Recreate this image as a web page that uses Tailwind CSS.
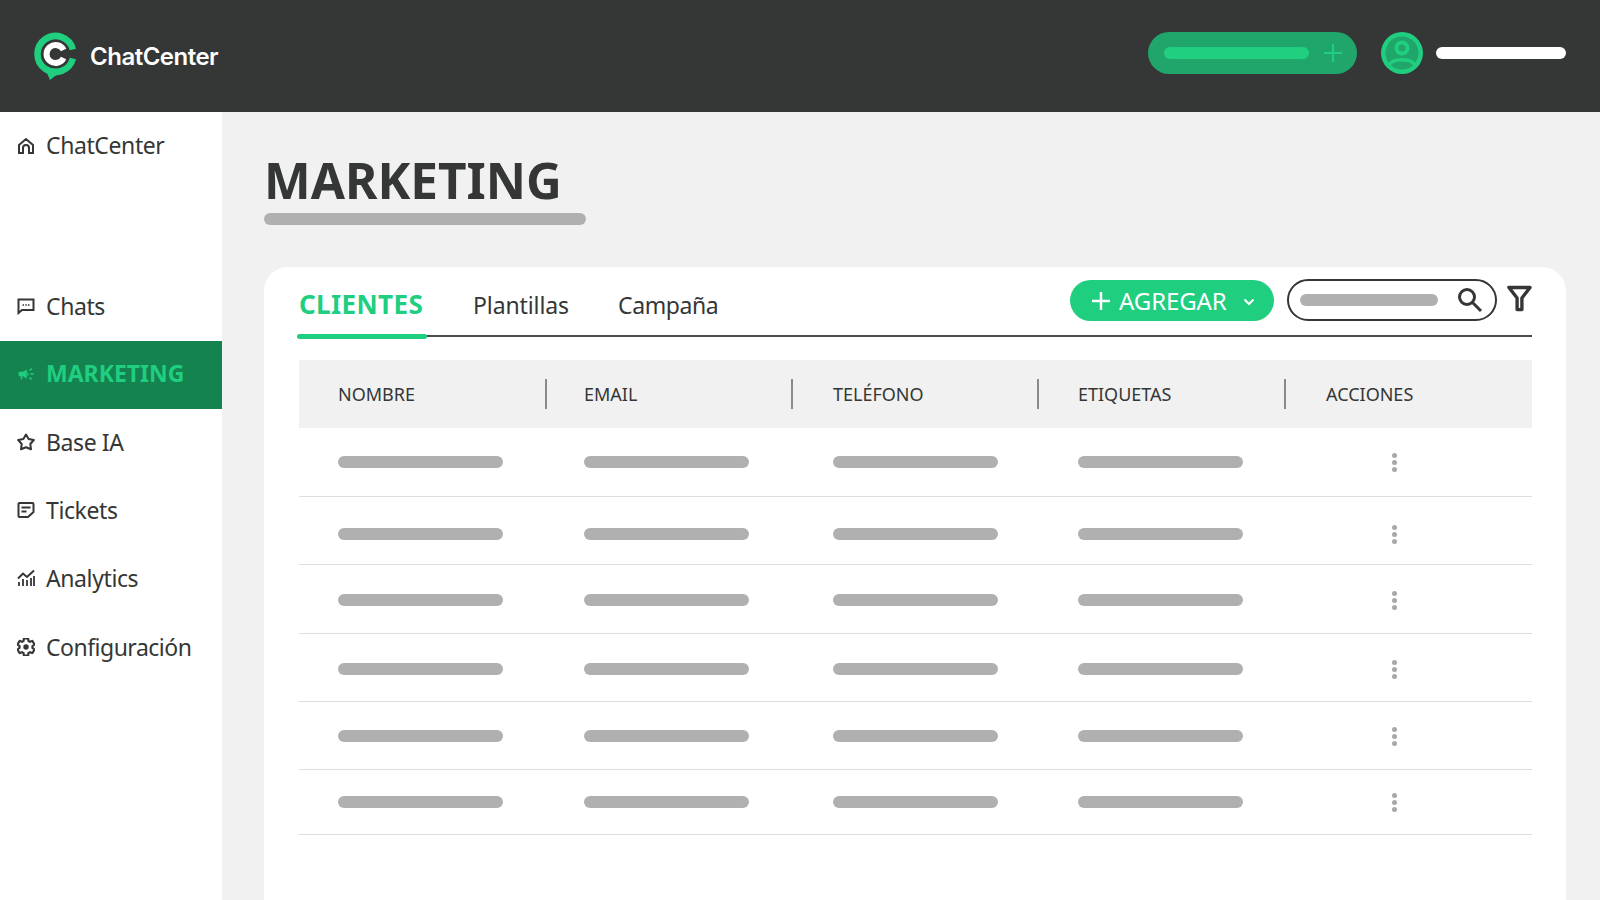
<!DOCTYPE html>
<html lang="es">
<head>
    <meta charset="UTF-8">
    <meta name="viewport" content="width=device-width, initial-scale=1.0">
    <title>ChatCenter - Marketing</title>
    <script src="https://cdn.jsdelivr.net/npm/@tailwindcss/browser@4"></script>
</head>
<body class="h-screen overflow-hidden flex flex-col bg-[#f1f1f1] text-[#343736] font-['Noto_Sans',sans-serif]">

<!-- Header -->
<header class="h-[112px] shrink-0 bg-[#343736] flex items-center pl-[33px] pr-[34px]">
    <svg class="w-[44px] h-[50px] mt-[2px]" viewBox="0 0 44 50" fill="none">
        <path d="M39.900 17.500A18 18 0 1 0 39.900 26.500" stroke="#20ce7f" stroke-width="6.500"/>
        <path d="M12 36L17 48L31 37Z" fill="#20ce7f"/>
        <path d="M30.600 18A9 9 0 1 0 30.600 26" stroke="#fff" stroke-width="6"/>
    </svg>
    <span class="ml-[13px] mt-[2px] text-[24px] font-semibold text-white font-['Inter',sans-serif] tracking-[-0.5px]">ChatCenter</span>
    <div class="ml-auto flex items-center pb-[6px]">
        <div class="w-[209px] h-[42px] rounded-full bg-[#20a56a] flex items-center pl-[16px]">
            <div class="w-[145px] h-[12px] rounded-full bg-[#20d080]"></div>
            <svg class="w-[20px] h-[20px] ml-[14px]" viewBox="0 0 20 20" fill="none" stroke="#20ce7f" stroke-width="2"><path d="M10 1v18M1 10h18"/></svg>
        </div>
        <svg class="w-[42px] h-[42px] ml-[24px]" viewBox="0 0 42 42">
            <circle cx="21" cy="21" r="21" fill="#20ce7f"/>
            <circle cx="21" cy="21" r="16.500" fill="#20a56a"/>
            <circle cx="21" cy="16" r="7.500" fill="#20ce7f"/>
            <circle cx="21" cy="16" r="3.500" fill="#20a56a"/>
            <path d="M8 33C12 26 30 26 34 33" fill="none" stroke="#20ce7f" stroke-width="3.500"/>
        </svg>
        <div class="ml-[13px] w-[130px] h-[12px] rounded-full bg-white"></div>
    </div>
</header>

<div class="flex flex-1 min-h-0">
    <!-- Sidebar -->
    <aside class="w-[222px] shrink-0 bg-white text-[23px] tracking-[-0.4px]">
        <a class="h-[67px] flex items-center pl-[17px] gap-[11px]">
            <svg class="w-[18px] h-[18px]" viewBox="0 0 18 18" fill="none" stroke="#343736" stroke-width="2"><path d="M2 8L9 2l7 6v8h-4v-5a3 3 0 0 0-6 0v5H2z"/></svg>
            <span>ChatCenter</span>
        </a>
        <a class="h-[68px] pb-[2px] mt-[94px] flex items-center pl-[17px] gap-[11px]">
            <svg class="w-[18px] h-[18px]" viewBox="0 0 18 18" fill="none" stroke="#343736" stroke-width="2"><path d="M1.500 2.500h15v10.500H5l-3.500 3z"/><path d="M5.500 8h1.500M8.300 8h1.500M11 8h1.500" stroke-width="1.500"/></svg>
            <span>Chats</span>
        </a>
        <a class="h-[68px] pb-[3px] flex items-center pl-[17px] gap-[11px] bg-[#14834f] text-[#20ce7f] font-bold tracking-normal">
            <svg class="w-[18px] h-[18px]" viewBox="0 0 24 24" fill="#20ce7f"><path d="M18 11v2h4v-2h-4zm-2 6.610c.96.71 2.210 1.650 3.200 2.390.4-.53.8-1.070 1.200-1.600-.99-.74-2.240-1.680-3.200-2.400-.4.54-.8 1.080-1.200 1.610zM20.400 5.600c-.4-.53-.8-1.070-1.200-1.600-.99.74-2.240 1.680-3.200 2.400.4.53.8 1.070 1.200 1.600.96-.72 2.210-1.650 3.200-2.400zM4 9c-1.100 0-2 .9-2 2v2c0 1.100.9 2 2 2h1v4h2v-4h1l5 3V6L8 9H4zm11.500 3c0-1.330-.58-2.530-1.500-3.350v6.690c.92-.81 1.500-2.010 1.500-3.340z"/></svg>
            <span>MARKETING</span>
        </a>
        <a class="h-[68px] pb-[2px] flex items-center pl-[17px] gap-[11px]">
            <svg class="w-[18px] h-[18px]" viewBox="0 0 18 18" fill="none" stroke="#343736" stroke-width="2" stroke-linejoin="round"><path d="M9 1.500L11.600 6L16.800 7L13.300 11L14 16.300L9 14.300L4 16.300L4.700 11L1.200 7L6.400 6Z"/></svg>
            <span>Base IA</span>
        </a>
        <a class="h-[68px] pb-[2px] flex items-center pl-[17px] gap-[11px]">
            <svg class="w-[18px] h-[18px]" viewBox="0 0 18 18" fill="none" stroke="#343736" stroke-width="2"><path d="M2.500 2h13a1 1 0 0 1 1 1v8l-5.500 5H2.500a1 1 0 0 1-1-1V3a1 1 0 0 1 1-1z"/><path d="M4.500 6.500h9M4.500 10.500h5"/></svg>
            <span>Tickets</span>
        </a>
        <a class="h-[68px] pb-[2px] flex items-center pl-[17px] gap-[11px]">
            <svg class="w-[18px] h-[18px]" viewBox="0 0 18 18" fill="none" stroke="#343736" stroke-width="2"><path d="M2 17v-4M6 17v-7M10 17v-6M14 17V9M17 17V7" stroke-width="1.800"/><path d="M1 9.500L6 4.500l4 3.500L17 1.500"/></svg>
            <span>Analytics</span>
        </a>
        <a class="h-[68px] flex items-center pl-[17px] gap-[11px]">
            <svg class="w-[18px] h-[18px]" viewBox="2 2 20 20" fill="none" stroke="#343736" stroke-width="2.400"><path d="M19.140 12.940c.04-.3.06-.61.06-.94 0-.32-.02-.64-.07-.94l2.030-1.580c.18-.14.23-.41.12-.61l-1.920-3.320c-.12-.22-.37-.29-.59-.22l-2.390.96c-.5-.38-1.030-.7-1.620-.94l-.36-2.540c-.04-.24-.24-.41-.48-.41h-3.840c-.24 0-.43.17-.47.41l-.36 2.540c-.59.24-1.130.57-1.620.94l-2.390-.96c-.22-.08-.47 0-.59.22L2.740 8.870c-.12.21-.08.47.12.61l2.030 1.580c-.05.3-.09.63-.09.94s.02.64.07.94l-2.030 1.580c-.18.14-.23.41-.12.61l1.920 3.320c.12.22.37.29.59.22l2.390-.96c.5.38 1.030.7 1.620.94l.36 2.540c.05.24.24.41.48.41h3.840c.24 0 .44-.17.47-.41l.36-2.540c.59-.24 1.130-.56 1.620-.94l2.390.96c.22.08.47 0 .59-.22l1.920-3.320c.12-.22.07-.47-.12-.61l-2.010-1.580z"/><circle cx="12" cy="12" r="3" fill="#343736" stroke="none"/></svg>
            <span class="tracking-[-0.5px]">Configuración</span>
        </a>
    </aside>

    <!-- Main -->
    <main class="flex-1 min-w-0 pl-[42px] pr-[34px] flex flex-col">
        <h1 class="mt-[40px] h-[56px] leading-[56px] text-[49.500px] font-bold">MARKETING</h1>
        <div class="mt-[5px] w-[322px] h-[12px] rounded-full bg-[#b0b0b0] shrink-0"></div>

        <section class="mt-[42px] flex-1 bg-white rounded-t-[24px] pl-[35px] pr-[34px] pt-[12px]">
            <!-- Tabs and tools -->
            <div class="h-[58px] flex border-b-2 border-[#4a4c4b] text-[23px]">
                <div class="relative w-[130px] -ml-[2px] pl-[2px] h-[58px] flex items-center text-[#20ce7f] text-[26px] tracking-[0.4px] font-bold pb-[7px]">
                    CLIENTES
                    <div class="absolute left-0 right-0 -bottom-[2px] h-[5px] rounded-full bg-[#20ce7f]"></div>
                </div>
                <div class="ml-[46px] h-[56px] flex items-center pb-[4px] tracking-[-0.1px]">Plantillas</div>
                <div class="ml-[49px] h-[56px] flex items-center pb-[4px] tracking-[-0.4px]">Campaña</div>
                <div class="ml-auto h-[41px] mt-[1px] w-[204px] rounded-full bg-[#20ce7f] text-white text-[24px] flex items-center pl-[22px]">
                    <svg class="w-[18px] h-[18px]" viewBox="0 0 18 18" fill="none" stroke="#fff" stroke-width="2.500"><path d="M9 0v18M0 9h18"/></svg>
                    <span class="ml-[9px] tracking-[-0.1px]">AGREGAR</span>
                    <svg class="w-[12px] h-[8px] ml-[16px] mt-[2px]" viewBox="0 0 12 8" fill="none" stroke="#fff" stroke-width="2"><path d="M1.500 1.500L6 6l4.500-4.500"/></svg>
                </div>
                <div class="ml-[13px] h-[42px] w-[210px] rounded-full border-2 border-[#343736] flex items-center pl-[11px]">
                    <div class="w-[138px] h-[12px] rounded-full bg-[#b0b0b0]"></div>
                    <svg class="w-[26px] h-[26px] ml-[19px]" viewBox="0 0 26 26" fill="none" stroke="#343736" stroke-width="3"><circle cx="10" cy="10" r="7.500"/><path d="M15.500 15.500L24 24"/></svg>
                </div>
                <svg class="w-[25px] h-[27px] ml-[10px] mt-[6px]" viewBox="0 0 26 27" fill="none" stroke="#343736" stroke-width="3.500" stroke-linejoin="round"><path d="M2 2h22l-8.500 11v12h-5V13z"/></svg>
            </div>

            <!-- Table -->
            <div class="mt-[23px] h-[68px] bg-[#f1f1f1] pl-[39px] grid grid-cols-[246px_249px_245px_248px_1fr] items-center text-[18px]">
                <div class="flex items-center justify-between pr-[37px]"><span>NOMBRE</span><div class="w-[2px] h-[30px] bg-[#8a8a8a]"></div></div>
                <div class="flex items-center justify-between pr-[40px]"><span>EMAIL</span><div class="w-[2px] h-[30px] bg-[#8a8a8a]"></div></div>
                <div class="flex items-center justify-between pr-[39px]"><span>TELÉFONO</span><div class="w-[2px] h-[30px] bg-[#8a8a8a]"></div></div>
                <div class="flex items-center justify-between pr-[40px]"><span>ETIQUETAS</span><div class="w-[2px] h-[30px] bg-[#8a8a8a]"></div></div>
                <div>ACCIONES</div>
            </div>

            <div class="h-[69px] pt-[28px] pl-[39px] border-b border-[#dedede] grid grid-cols-[246px_249px_245px_248px_1fr]">
                <div class="w-[165px] h-[12px] rounded-full bg-[#b0b0b0]"></div><div class="w-[165px] h-[12px] rounded-full bg-[#b0b0b0]"></div><div class="w-[165px] h-[12px] rounded-full bg-[#b0b0b0]"></div><div class="w-[165px] h-[12px] rounded-full bg-[#b0b0b0]"></div>
                <div class="pl-[66px] -mt-[3px] flex flex-col gap-[2px]"><i class="w-[5px] h-[5px] rounded-full bg-[#a8a8a8]"></i><i class="w-[5px] h-[5px] rounded-full bg-[#a8a8a8]"></i><i class="w-[5px] h-[5px] rounded-full bg-[#a8a8a8]"></i></div>
            </div>
            <div class="h-[68px] pt-[31px] pl-[39px] border-b border-[#dedede] grid grid-cols-[246px_249px_245px_248px_1fr]">
                <div class="w-[165px] h-[12px] rounded-full bg-[#b0b0b0]"></div><div class="w-[165px] h-[12px] rounded-full bg-[#b0b0b0]"></div><div class="w-[165px] h-[12px] rounded-full bg-[#b0b0b0]"></div><div class="w-[165px] h-[12px] rounded-full bg-[#b0b0b0]"></div>
                <div class="pl-[66px] -mt-[3px] flex flex-col gap-[2px]"><i class="w-[5px] h-[5px] rounded-full bg-[#a8a8a8]"></i><i class="w-[5px] h-[5px] rounded-full bg-[#a8a8a8]"></i><i class="w-[5px] h-[5px] rounded-full bg-[#a8a8a8]"></i></div>
            </div>
            <div class="h-[69px] pt-[29px] pl-[39px] border-b border-[#dedede] grid grid-cols-[246px_249px_245px_248px_1fr]">
                <div class="w-[165px] h-[12px] rounded-full bg-[#b0b0b0]"></div><div class="w-[165px] h-[12px] rounded-full bg-[#b0b0b0]"></div><div class="w-[165px] h-[12px] rounded-full bg-[#b0b0b0]"></div><div class="w-[165px] h-[12px] rounded-full bg-[#b0b0b0]"></div>
                <div class="pl-[66px] -mt-[3px] flex flex-col gap-[2px]"><i class="w-[5px] h-[5px] rounded-full bg-[#a8a8a8]"></i><i class="w-[5px] h-[5px] rounded-full bg-[#a8a8a8]"></i><i class="w-[5px] h-[5px] rounded-full bg-[#a8a8a8]"></i></div>
            </div>
            <div class="h-[68px] pt-[29px] pl-[39px] border-b border-[#dedede] grid grid-cols-[246px_249px_245px_248px_1fr]">
                <div class="w-[165px] h-[12px] rounded-full bg-[#b0b0b0]"></div><div class="w-[165px] h-[12px] rounded-full bg-[#b0b0b0]"></div><div class="w-[165px] h-[12px] rounded-full bg-[#b0b0b0]"></div><div class="w-[165px] h-[12px] rounded-full bg-[#b0b0b0]"></div>
                <div class="pl-[66px] -mt-[3px] flex flex-col gap-[2px]"><i class="w-[5px] h-[5px] rounded-full bg-[#a8a8a8]"></i><i class="w-[5px] h-[5px] rounded-full bg-[#a8a8a8]"></i><i class="w-[5px] h-[5px] rounded-full bg-[#a8a8a8]"></i></div>
            </div>
            <div class="h-[68px] pt-[28px] pl-[39px] border-b border-[#dedede] grid grid-cols-[246px_249px_245px_248px_1fr]">
                <div class="w-[165px] h-[12px] rounded-full bg-[#b0b0b0]"></div><div class="w-[165px] h-[12px] rounded-full bg-[#b0b0b0]"></div><div class="w-[165px] h-[12px] rounded-full bg-[#b0b0b0]"></div><div class="w-[165px] h-[12px] rounded-full bg-[#b0b0b0]"></div>
                <div class="pl-[66px] -mt-[3px] flex flex-col gap-[2px]"><i class="w-[5px] h-[5px] rounded-full bg-[#a8a8a8]"></i><i class="w-[5px] h-[5px] rounded-full bg-[#a8a8a8]"></i><i class="w-[5px] h-[5px] rounded-full bg-[#a8a8a8]"></i></div>
            </div>
            <div class="h-[65px] pt-[26px] pl-[39px] border-b border-[#dedede] grid grid-cols-[246px_249px_245px_248px_1fr]">
                <div class="w-[165px] h-[12px] rounded-full bg-[#b0b0b0]"></div><div class="w-[165px] h-[12px] rounded-full bg-[#b0b0b0]"></div><div class="w-[165px] h-[12px] rounded-full bg-[#b0b0b0]"></div><div class="w-[165px] h-[12px] rounded-full bg-[#b0b0b0]"></div>
                <div class="pl-[66px] -mt-[3px] flex flex-col gap-[2px]"><i class="w-[5px] h-[5px] rounded-full bg-[#a8a8a8]"></i><i class="w-[5px] h-[5px] rounded-full bg-[#a8a8a8]"></i><i class="w-[5px] h-[5px] rounded-full bg-[#a8a8a8]"></i></div>
            </div>
        </section>
    </main>
</div>
</body>
</html>
